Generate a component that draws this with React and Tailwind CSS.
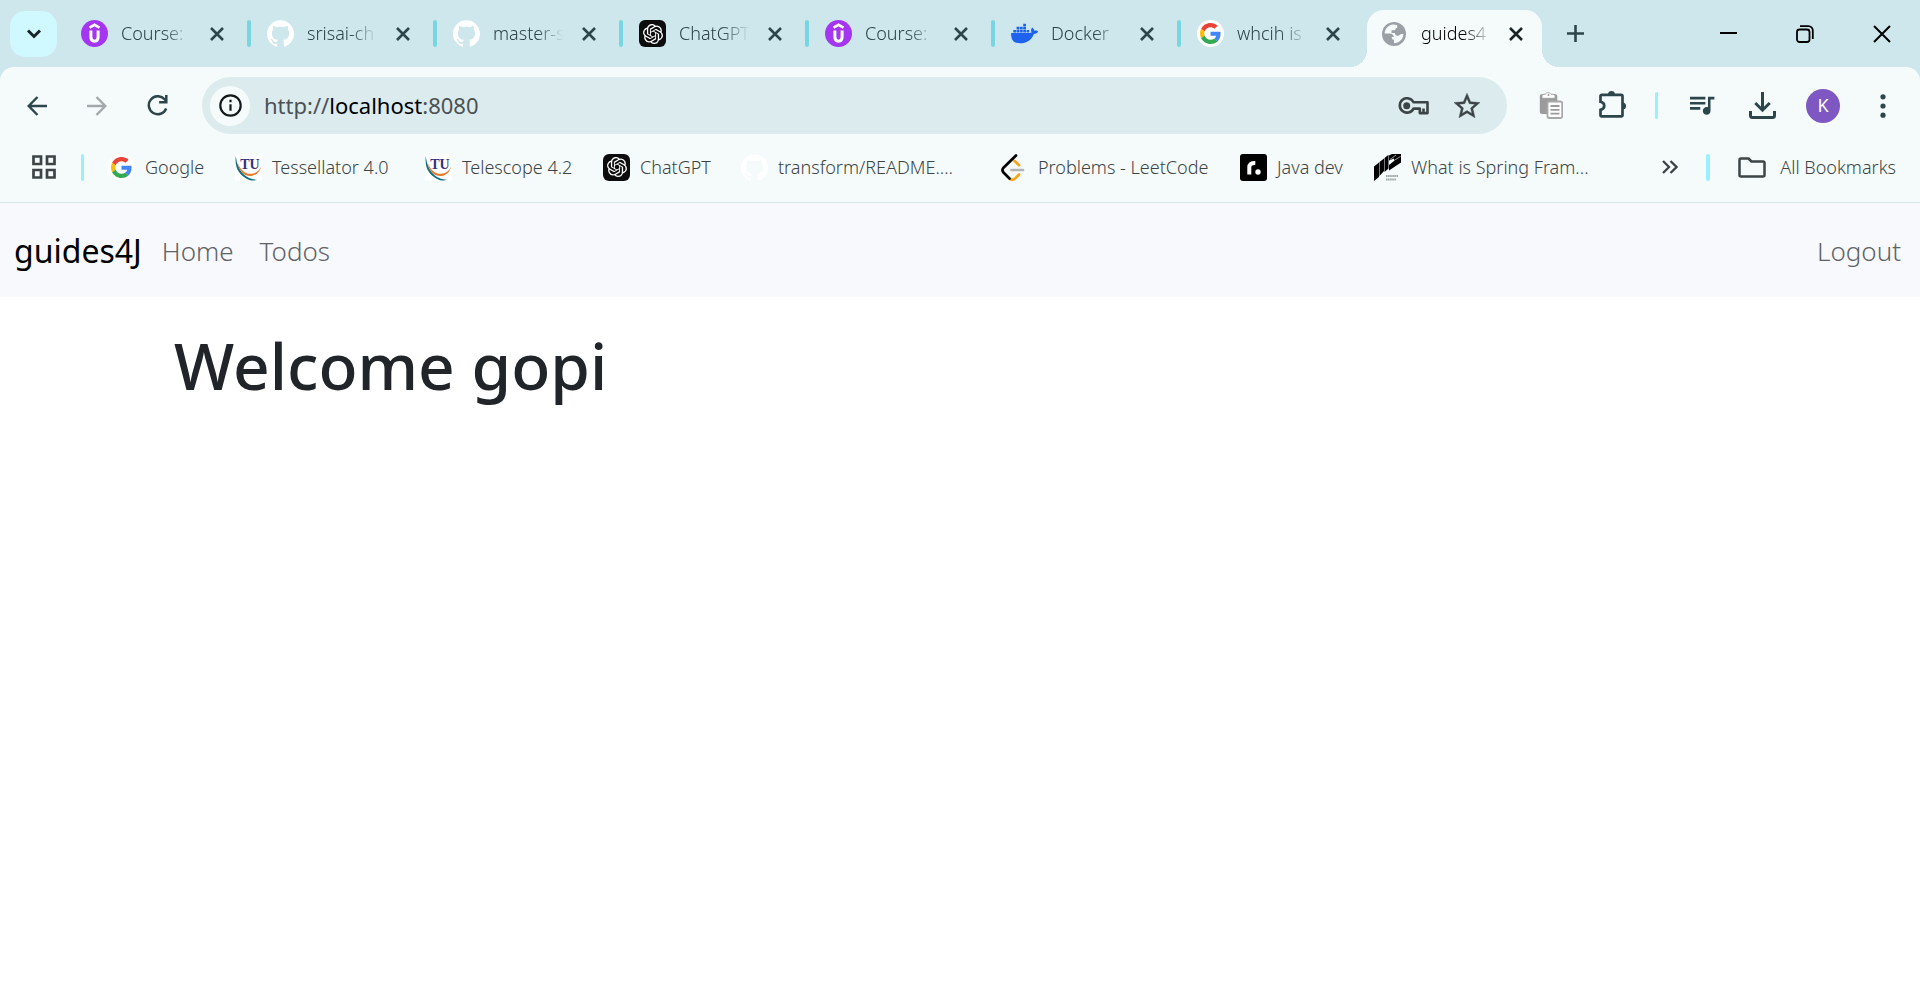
import React from "react";
import { SiGithub, SiOpenai, SiDocker } from "react-icons/si";

function UdemyIcon() {
  return (
    <svg viewBox="0 0 27 27" className="size-[27px] shrink-0" aria-hidden="true">
      <circle cx="13.5" cy="13.5" r="13.5" fill="#a435f0" />
      <path d="M8.500 7.600 13.500 4.800l5 2.800" fill="none" stroke="#fff" strokeWidth="2.600" />
      <path d="M9.900 10.400v6.600c0 2.800 1.400 4.200 3.600 4.200s3.600-1.400 3.600-4.200v-6.600" fill="none" stroke="#fff" strokeWidth="3" />
    </svg>
  );
}

function GithubIcon() {
  return <SiGithub className="size-[27px] shrink-0 text-white" aria-hidden="true" />;
}

function ChatGptIcon() {
  return (
    <span className="flex size-[27px] shrink-0 items-center justify-center rounded-md bg-[#0d0d0d] text-white">
      <SiOpenai className="size-[20px]" aria-hidden="true" />
    </span>
  );
}

function DockerIcon() {
  return <SiDocker className="size-[27px] shrink-0 text-[#1d63ed]" aria-hidden="true" />;
}

function GoogleIcon() {
  return (
    <span className="flex size-[27px] shrink-0 items-center justify-center rounded-full bg-white">
      <svg viewBox="0 0 48 48" className="size-[21px]" aria-hidden="true">
        <path fill="#ea4335" d="M24 9.500c3.500 0 6.700 1.200 9.200 3.600l6.900-6.900C35.900 2.400 30.500 0 24 0 14.600 0 6.500 5.400 2.600 13.200l8 6.200C12.400 13.700 17.700 9.500 24 9.500z" />
        <path fill="#4285f4" d="M47 24.600c0-1.600-.2-3.100-.4-4.600H24v9h12.900c-.6 3-2.300 5.500-4.800 7.200l7.700 6C44.400 38 47 32 47 24.600z" />
        <path fill="#fbbc05" d="M10.500 28.600c-.5-1.500-.8-3-.8-4.600s.3-3.100.8-4.600l-8-6.200C.9 16.500 0 20.100 0 24s.9 7.500 2.600 10.800l7.900-6.200z" />
        <path fill="#34a853" d="M24 48c6.500 0 11.900-2.100 15.900-5.800l-7.700-6c-2.200 1.500-4.900 2.300-8.200 2.300-6.300 0-11.600-4.200-13.500-9.900l-8 6.200C6.500 42.600 14.600 48 24 48z" />
      </svg>
    </span>
  );
}

function GlobeIcon() {
  return (
    <svg viewBox="0 0 24 24" className="size-[24px] shrink-0" aria-hidden="true">
      <circle cx="12" cy="12" r="12" fill="#9aa0a6" />
      <path
        fill="#f5fbfb"
        d="M9.500 2.800C5.500 4 2.800 7.500 2.600 11.500l5.400 0c2 0 3.600 1.600 3.800 3.400l-2 .1c-.2 1.700.5 2.700 2.200 2.800v3.500c5 0 9.300-4 9.400-9.200l-2.600 0c-.9 1.400-2.400 2-4 1.600-1.200-.3-1.800-1.200-1.900-2.600H9.500V8.300h2.300c1.300-.2 2-1 2-2.400h1.400V3.200c-1.700-.8-3.900-.9-5.700-.4z"
      />
    </svg>
  );
}

function TessellatorIcon() {
  return (
    <svg viewBox="0 0 27 27" className="size-[27px] shrink-0" aria-hidden="true">
      <rect width="27" height="27" fill="#fff" />
      <path d="M.8 2C-.6 14 4 22 15 26.200c3 .7 5 .5 7-.4C11 25 2.500 18 .8 2z" fill="#0f6f83" />
      <path d="M2.800 9c1.200 9 7.200 13.600 13.500 13C21.500 21.500 25 17.500 26.500 12c-2.500 5.200-6 7.600-10.500 7.800C10.500 20 6 17 2.800 9z" fill="#e8792b" />
      <text x="15" y="15" textAnchor="middle" fontFamily="Liberation Serif, serif" fontWeight="700" fontSize="14" fill="#34307d">
        TU
      </text>
    </svg>
  );
}

function LeetCodeIcon() {
  return (
    <svg viewBox="0 0 27 27" className="size-[27px] shrink-0" fill="none" strokeWidth="2.700" strokeLinecap="round" aria-hidden="true">
      <path d="M13.500 7 18 11.200M18 20.500l-3.500 3.600c-1.500 1.500-3.500 2-5.500 1" stroke="#ffa116" />
      <path d="M15 1.500 2.500 13.700c-1.300 1.500-1.300 3.300 0 4.800l6 6" stroke="#000" />
      <path d="M10.500 16h11.500" stroke="#b3b3b3" />
    </svg>
  );
}

function RoadmapIcon() {
  return (
    <svg viewBox="0 0 27 27" className="size-[27px] shrink-0" aria-hidden="true">
      <rect width="27" height="27" rx="3" fill="#000" />
      <path d="M9.300 20.500v-7c0-3 1.500-4.500 6-4.400" fill="none" stroke="#fff" strokeWidth="4" />
      <circle cx="18" cy="18" r="2.700" fill="#fff" />
    </svg>
  );
}

function MarcoIcon() {
  return (
    <svg viewBox="0 0 27 27" className="size-[27px] shrink-0" aria-hidden="true">
      <path d="M0 12.500 5 8.500v14.500L0 27zM5.500 8 10 4.500V17l-4.500 5zM10.500 4 14.500.8V14.500l-4 3.500z" fill="#000" />
      <path d="M15 1.500 18 0h9v8.500L15 16.500v-5.500l5-4V4.500l-5 2z" fill="#000" />
      <path d="m16 5.500 6-4.500M20 6.500l6.500-4" stroke="#d5dada" strokeWidth=".7" />
      <path d="M12 22h12M12 25.500h10.500" stroke="#9aa1a1" strokeWidth="2" strokeDasharray="1.500 .6" />
    </svg>
  );
}

function CloseIcon({ className }) {
  return (
    <svg viewBox="0 0 14 14" className={className} fill="none" stroke="currentColor" strokeWidth="2.600" aria-hidden="true">
      <path d="m1 1 12 12M13 1 1 13" />
    </svg>
  );
}

const TABS = [
  { title: "Course:", icon: UdemyIcon },
  { title: "srisai-ch", icon: GithubIcon },
  { title: "master-s", icon: GithubIcon },
  { title: "ChatGPT", icon: ChatGptIcon },
  { title: "Course:", icon: UdemyIcon },
  { title: "Docker", icon: DockerIcon },
  { title: "whcih is", icon: GoogleIcon, last: true },
];

const BOOKMARKS = [
  { title: "Google", icon: GoogleIcon, width: "w-[127px]" },
  { title: "Tessellator 4.0", icon: TessellatorIcon, width: "w-[190px]" },
  { title: "Telescope 4.2", icon: TessellatorIcon, width: "w-[178px]" },
  { title: "ChatGPT", icon: ChatGptIcon, width: "w-[138px]" },
  { title: "transform/README....", icon: GithubIcon, width: "w-[260px]" },
  { title: "Problems - LeetCode", icon: LeetCodeIcon, width: "w-[239px]" },
  { title: "Java dev", icon: RoadmapIcon, width: "w-[134px]" },
  { title: "What is Spring Fram...", icon: MarcoIcon, width: "w-[232px]" },
];

const FADE = "[mask-image:linear-gradient(to_right,black_60%,transparent_98%)]";

function Tab({ title, icon: Icon, last }) {
  return (
    <div className="flex h-[67px] w-[186px] min-w-0 items-center pl-[16px]">
      <Icon />
      <span className={`ml-[13px] w-[72px] shrink-0 whitespace-nowrap text-[18px] font-light text-[#2b4348] ${FADE}`}>{title}</span>
      <button type="button" aria-label={`Close ${title}`} className="ml-[17px] shrink-0 text-[#2c464c]">
        <CloseIcon className="size-[14px]" />
      </button>
      {!last && <span className="ml-auto h-[27px] w-[4px] shrink-0 rounded-full bg-[#78d6e4]" />}
    </div>
  );
}

function TabStrip() {
  return (
    <header className="flex h-[67px] items-center">
      <button type="button" aria-label="Search tabs" className="ml-[10px] flex h-[46px] w-[47px] shrink-0 items-center justify-center rounded-[15px] bg-[#cff8ff]">
        <svg viewBox="0 0 16 12" className="h-[12px] w-[16px]" fill="none" stroke="#1a2426" strokeWidth="3" aria-hidden="true">
          <path d="m2 2.500 6 6 6-6" />
        </svg>
      </button>
      <div className="ml-[8px] flex min-w-0">
        {TABS.map((tab, i) => (
          <Tab key={i} {...tab} />
        ))}
        <div className="relative mt-[10px] flex h-[57px] w-[175px] shrink-0 items-center rounded-t-[17px] bg-[#f5fbfb] pb-[10px] pl-[15px]">
          <span className="absolute bottom-0 -left-[17px] size-[17px] bg-[radial-gradient(circle_at_0_0,transparent_17px,#f5fbfb_17px)]" />
          <span className="absolute -right-[17px] bottom-0 size-[17px] bg-[radial-gradient(circle_at_100%_0,transparent_17px,#f5fbfb_17px)]" />
          <GlobeIcon />
          <span className={`ml-[15px] w-[72px] whitespace-nowrap text-[18px] font-light text-black ${FADE}`}>guides4</span>
          <button type="button" aria-label="Close guides4J" className="ml-[16px] text-[#1a2426]">
            <CloseIcon className="size-[14px]" />
          </button>
        </div>
      </div>
      <button type="button" aria-label="New tab" className="ml-[25px] shrink-0 text-[#2c464c]">
        <svg viewBox="0 0 17 17" className="size-[17px]" stroke="currentColor" strokeWidth="2.600" aria-hidden="true">
          <path d="M8.500 0v17M0 8.500h17" />
        </svg>
      </button>
      <div className="mr-[29px] ml-auto flex shrink-0 items-center gap-[59px] text-black">
        <button type="button" aria-label="Minimize">
          <svg viewBox="0 0 17 17" className="size-[17px]" stroke="currentColor" strokeWidth="2" aria-hidden="true">
            <path d="M0 8h17" />
          </svg>
        </button>
        <button type="button" aria-label="Restore">
          <svg viewBox="0 0 18 18" className="size-[18px]" fill="none" stroke="currentColor" strokeWidth="1.800" aria-hidden="true">
            <rect x="1" y="4.500" width="12.500" height="12.500" rx="2.500" />
            <path d="M4 1.200h8.500a4.300 4.300 0 0 1 4.300 4.300V14" />
          </svg>
        </button>
        <button type="button" aria-label="Close window">
          <svg viewBox="0 0 18 18" className="size-[18px]" stroke="currentColor" strokeWidth="2" aria-hidden="true">
            <path d="m1 1 16 16M17 1 1 17" />
          </svg>
        </button>
      </div>
    </header>
  );
}

function ArrowIcon({ className }) {
  return (
    <svg viewBox="0 0 20 20" className={className} fill="none" stroke="currentColor" strokeWidth="2.400" aria-hidden="true">
      <path d="M20 10H2M10.500 1 1.700 10l8.800 9" />
    </svg>
  );
}

function Toolbar() {
  return (
    <div className="flex h-[57px] items-center">
      <nav aria-label="History" className="ml-[27px] flex shrink-0 items-center gap-[40px] text-[#2c464c]">
        <button type="button" aria-label="Back">
          <ArrowIcon className="size-[20px]" />
        </button>
        <button type="button" aria-label="Forward" className="text-[#a3a9aa]">
          <ArrowIcon className="size-[20px] rotate-180" />
        </button>
        <button type="button" aria-label="Reload">
          <svg viewBox="0 0 21 21" className="size-[21px]" fill="none" stroke="currentColor" strokeWidth="2.500" aria-hidden="true">
            <path d="M19.200 13.500a9 9 0 1 1-1.600-9.200l1.500 1.800" />
            <path d="M19.300 0v7.200h-7.200" />
          </svg>
        </button>
      </nav>
      <div className="ml-[34px] flex h-[57px] min-w-0 flex-1 items-center rounded-full bg-[#dcebee]">
        <button type="button" aria-label="View site information" className="ml-[8px] flex size-[40px] shrink-0 items-center justify-center rounded-full bg-[#f5fbfb] text-[#14191a]">
          <svg viewBox="0 0 23 23" className="size-[23px]" fill="none" stroke="currentColor" strokeWidth="2.200" aria-hidden="true">
            <circle cx="11.500" cy="11.500" r="10.200" />
            <path d="M11.500 10.200v6.600M11.500 5.800v2.500" />
          </svg>
        </button>
        <div className="relative ml-[14px] flex-1 pb-[2px] text-[22px] leading-[30px]">
          <div aria-hidden="true" className="whitespace-nowrap text-[#4a5153]">
            http://<span className="text-black">localhost</span>:8080
          </div>
          <input
            type="text"
            aria-label="Address"
            defaultValue="http://localhost:8080"
            className="absolute inset-0 w-full bg-transparent text-transparent outline-none"
          />
        </div>
        <button type="button" aria-label="Manage passwords" className="mr-[25px] text-[#3c4446]">
          <svg viewBox="0 0 31 18" className="h-[18px] w-[31px]" fill="none" stroke="currentColor" strokeWidth="2.600" strokeLinejoin="round" aria-hidden="true">
            <path d="M15.500 5.300H29.500v10.800h-7.700v-4.500h-6.300A7.200 7.200 0 1 1 15.500 5.300z" />
            <circle cx="8.700" cy="8.700" r="3.500" fill="currentColor" stroke="none" />
            <path d="M25.500 16v-4.500" />
          </svg>
        </button>
        <button type="button" aria-label="Bookmark this tab" className="mr-[27px] text-[#3c4446]">
          <svg viewBox="2 2 20 19" className="h-[25px] w-[26px]" fill="currentColor" stroke="currentColor" strokeWidth=".3" aria-hidden="true">
            <path d="m22 9.240-7.190-.62L12 2 9.190 8.630 2 9.240l5.460 4.730L5.820 21 12 17.270 18.180 21l-1.630-7.030L22 9.240zM12 15.400l-3.760 2.270 1-4.280-3.320-2.880 4.380-.38L12 6.100l1.710 4.040 4.380.38-3.320 2.880 1 4.280L12 15.400z" />
          </svg>
        </button>
      </div>
      <div className="ml-[32px] flex shrink-0 items-center text-[#2c464c]">
        <button type="button" aria-label="Clipboard" className="mr-[36px]">
          <svg viewBox="0 0 24 27" className="h-[27px] w-[24px]" aria-hidden="true">
            <rect x=".8" y="2" width="17.500" height="20" rx="2.500" fill="#9b9b9b" />
            <path d="M3 4.500c0-2 1-2.300 3.500-2.300 0-2 4.500-2 5.500 0 3-.1 4 .3 4 2.300v1.800H3z" fill="#fff" stroke="#9b9b9b" strokeWidth=".8" />
            <circle cx="9.500" cy="3" r="1" fill="#9b9b9b" />
            <rect x="8.500" y="9.500" width="14.700" height="16.500" rx="1.800" fill="#fff" stroke="#a8a8a8" strokeWidth="1.800" />
            <path d="M11.500 14h9M11.500 17.800h9M11.500 21.600h9" stroke="#9b9b9b" strokeWidth="1.800" />
          </svg>
        </button>
        <button type="button" aria-label="Extensions" className="mr-[29px] mb-[3px]">
          <svg viewBox="0 0 27 27" className="size-[27px]" aria-hidden="true">
            <path
              d="M2.800 3.800h19.400c.8 0 1.300.5 1.300 1.300v19c0 .8-.5 1.300-1.300 1.300H2.800c-.8 0-1.300-.5-1.300-1.300v-5.300c5-1 5-7 0-8V5.100c0-.8.5-1.300 1.300-1.300z"
              fill="none"
              stroke="currentColor"
              strokeWidth="2.700"
            />
            <path d="M9 3.500a3.500 3.500 0 0 1 7 0zM23.500 11.500a3.500 3.500 0 0 1 0 7z" fill="currentColor" />
          </svg>
        </button>
        <span className="mr-[32px] h-[27px] w-[3px] rounded-full bg-[#9af0ff]" />
        <button type="button" aria-label="Media controls" className="mr-[34px]">
          <svg viewBox="3 5.500 19.500 14.500" className="h-[19px] w-[25px]" fill="currentColor" aria-hidden="true">
            <path d="M15 6H3v2h12V6zm0 4H3v2h12v-2zM3 16h8v-2H3v2zM17 6v8.180c-.31-.11-.65-.18-1-.18-1.660 0-3 1.340-3 3s1.340 3 3 3 3-1.340 3-3V8h3V6h-5z" />
          </svg>
        </button>
        <button type="button" aria-label="Downloads" className="mr-[30px]">
          <svg viewBox="0 0 27 27" className="size-[27px]" fill="none" stroke="currentColor" strokeWidth="3" aria-hidden="true">
            <path d="M13.500 0v17.500M6.300 11l7.200 7.200 7.200-7.200" />
            <path d="M1.500 19v4.500c0 1.200.8 2 2 2h20c1.200 0 2-.8 2-2V19" />
          </svg>
        </button>
        <button type="button" aria-label="Profile" className="mr-[40px] flex size-[34px] items-center justify-center rounded-full bg-[#7e57c2] text-[18px] text-white">
          K
        </button>
        <button type="button" aria-label="Menu" className="mr-[34px]">
          <svg viewBox="0 0 6 24" className="h-[24px] w-[6px]" fill="currentColor" aria-hidden="true">
            <circle cx="3" cy="2.800" r="2.600" />
            <circle cx="3" cy="12" r="2.600" />
            <circle cx="3" cy="21.200" r="2.600" />
          </svg>
        </button>
      </div>
    </div>
  );
}

function BookmarksBar() {
  return (
    <nav aria-label="Bookmarks" className="mt-[16px] mb-[18px] flex h-[34px] items-center text-[18px] whitespace-nowrap text-[#3c4446]">
      <button type="button" aria-label="Apps" className="ml-[32px] shrink-0">
        <svg viewBox="0 0 24 24" className="size-[24px]" fill="none" stroke="currentColor" strokeWidth="2.700" aria-hidden="true">
          <path d="M1.500 1.500h7.500v7.500h-7.500zM15 1.500h7.500v7.500H15zM1.500 15h7.500v7.500h-7.500zM15 15h7.500v7.500H15z" />
        </svg>
      </button>
      <span className="ml-[25px] h-[27px] w-[3px] shrink-0 rounded-full bg-[#9af0ff]" />
      <ul className="ml-[24px] flex min-w-0 items-center overflow-hidden">
        {BOOKMARKS.map(({ title, icon: Icon, width }) => (
          <li key={title} className={`shrink-0 ${width}`}>
            <a href="#bookmark" className="flex items-center gap-[10px] font-[360]">
              <Icon />
              {title}
            </a>
          </li>
        ))}
      </ul>
      <div className="mr-[24px] ml-auto flex shrink-0 items-center">
        <button type="button" aria-label="More bookmarks">
          <svg viewBox="0 0 16 14" className="h-[14px] w-[16px]" fill="none" stroke="currentColor" strokeWidth="2.300" aria-hidden="true">
            <path d="m1 1 6 6-6 6M8.500 1l6 6-6 6" />
          </svg>
        </button>
        <span className="mx-[28px] h-[27px] w-[4px] rounded-full bg-[#9af0ff]" />
        <button type="button" className="flex items-center gap-[14px] font-[360]">
          <svg viewBox="0 0 28 21" className="h-[21px] w-[28px]" fill="none" stroke="currentColor" strokeWidth="2.500" strokeLinejoin="round" aria-hidden="true">
            <path d="M3 1.500h7.500l3 3H25c.8 0 1.500.7 1.500 1.500v12c0 .8-.7 1.500-1.500 1.500H3c-.8 0-1.500-.7-1.500-1.500V3c0-.8.7-1.500 1.500-1.500z" />
          </svg>
          All Bookmarks
        </button>
      </div>
    </nav>
  );
}

export default function App() {
  return (
    <div className="flex min-h-screen flex-col bg-[#cee7ec] font-['Noto_Sans',sans-serif]">
      <TabStrip />
      <div className="rounded-t-[14px] border-b border-[#d9e5e7] bg-[#f5fbfb] pt-[10px]">
        <Toolbar />
        <BookmarksBar />
      </div>
      <div className="flex-1 bg-white">
        <nav aria-label="Main" className="flex h-[94px] items-center bg-[#f8f9fc] px-[14px] pt-[2px] text-[26px] font-[340] text-[#606366]">
          <a href="#top" className="text-[32px] font-normal text-black">
            guides4J
          </a>
          <a href="#home" className="ml-[20px]">
            Home
          </a>
          <a href="#todos" className="ml-[26px]">
            Todos
          </a>
          <a href="#logout" className="mr-[5px] ml-auto">
            Logout
          </a>
        </nav>
        <main className="mx-auto max-w-[1572px] pt-[32px]">
          <h1 className="text-[64px] leading-[74px] font-medium text-[#212529]">Welcome gopi</h1>
        </main>
      </div>
    </div>
  );
}
